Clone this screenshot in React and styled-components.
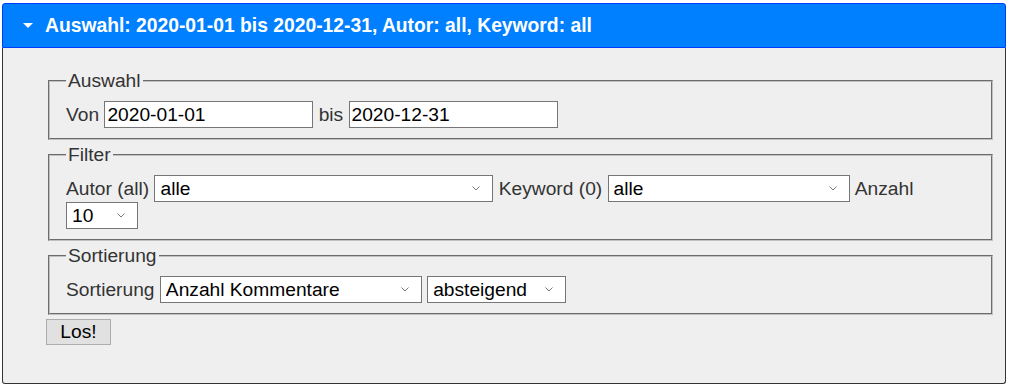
import React from "react";
import styled, { createGlobalStyle } from "styled-components";

const Global = createGlobalStyle`
  html, body { margin: 0; padding: 0; background: #ffffff; }
  body { font-family: "Liberation Sans", Arial, sans-serif; }
  * { box-sizing: border-box; }
`;

const Accordion = styled.div`
  margin: 3px 4px 0 2px;
  width: 1004px;
  font-family: "Liberation Sans", Arial, sans-serif;
  font-size: 19.2px;
`;

const Header = styled.div`
  display: flex;
  align-items: center;
  gap: 12px;
  height: 45px;
  padding-left: 20px;
  background: #007fff;
  border: 1px solid #003eff;
  border-radius: 3px 3px 0 0;
  color: #ffffff;
  font-weight: bold;
  font-size: 19.3px;
  line-height: 22px;
`;

const Caret = styled.svg`
  flex: none;
  display: block;
`;

const Content = styled.div`
  background: #efefef;
  border: 1px solid #333333;
  border-top: 0;
  border-radius: 0 0 3px 3px;
  padding: 22px 10px 38px 43px;
  color: #333333;
`;

const Form = styled.form`
  display: flex;
  flex-direction: column;
  gap: 4px;
  margin: 0;
`;

const Fieldset = styled.fieldset`
  margin: 0 2px;
  padding: 9px 16px 10px;
  border: 2px groove #c0c0c0;
  min-width: 0;
`;

const Legend = styled.legend`
  padding: 0 2px;
  font-size: 19.2px;
  line-height: 22px;
  color: #333333;
`;

const Row = styled.div`
  display: flex;
  flex-wrap: wrap;
  align-items: center;
  column-gap: 5.3px;
  row-gap: 0;
`;

const Label = styled.label`
  font-size: 19.2px;
  line-height: 22px;
  color: #333333;
  white-space: nowrap;
`;

const TextInput = styled.input`
  width: ${(p) => p.$w}px;
  height: 27px;
  padding: 1px 2px;
  border: 1px solid #767676;
  background: #ffffff;
  color: #000000;
  font-family: "Liberation Sans", Arial, sans-serif;
  font-size: 19.2px;
  outline: none;
`;

const SelectWrap = styled.span`
  position: relative;
  display: inline-block;
  width: ${(p) => p.$w}px;
  height: 27px;
`;

const Select = styled.select`
  appearance: none;
  -webkit-appearance: none;
  width: 100%;
  height: 27px;
  padding: 0 24px 0 5px;
  border: 1px solid #767676;
  border-radius: 0;
  background: #ffffff;
  color: #000000;
  font-family: "Liberation Sans", Arial, sans-serif;
  font-size: 19.2px;
  outline: none;
`;

const Chevron = styled.svg`
  position: absolute;
  right: 13px;
  top: 11px;
  pointer-events: none;
`;

const Button = styled.button`
  align-self: flex-start;
  width: 65px;
  height: 26px;
  padding: 0;
  background: #e1e1e1;
  border: 1px solid #adadad;
  border-radius: 0;
  color: #000000;
  font-family: "Liberation Sans", Arial, sans-serif;
  font-size: 19.2px;
  line-height: 22px;
`;

function Dropdown({ w, value, options }) {
  return (
    <SelectWrap $w={w}>
      <Select defaultValue={value}>
        {options.map((o) => (
          <option key={o} value={o}>
            {o}
          </option>
        ))}
      </Select>
      <Chevron width="8" height="5" viewBox="0 0 8 5">
        <path d="M0.5 0.5 L4 4 L7.5 0.5" fill="none" stroke="#7a7a7a" strokeWidth="1" />
      </Chevron>
    </SelectWrap>
  );
}

export default function App() {
  return (
    <>
      <Global />
      <Accordion>
        <Header>
          <Caret width="10" height="5" viewBox="0 0 10 5">
            <path d="M0 0 L10 0 L5 5 Z" fill="#ffffff" />
          </Caret>
          <span>Auswahl: 2020-01-01 bis 2020-12-31, Autor: all, Keyword: all</span>
        </Header>
        <Content>
          <Form onSubmit={(e) => e.preventDefault()}>
            <Fieldset>
              <Legend>Auswahl</Legend>
              <Row>
                <Label>Von</Label>
                <TextInput $w={209} defaultValue="2020-01-01" />
                <Label>bis</Label>
                <TextInput $w={209} defaultValue="2020-12-31" />
              </Row>
            </Fieldset>
            <Fieldset>
              <Legend>Filter</Legend>
              <Row>
                <Label>Autor (all)</Label>
                <Dropdown w={339} value="alle" options={["alle"]} />
                <Label>Keyword (0)</Label>
                <Dropdown w={242} value="alle" options={["alle"]} />
                <Label>Anzahl</Label>
                <Dropdown w={72} value="10" options={["10", "20", "50", "100"]} />
              </Row>
            </Fieldset>
            <Fieldset>
              <Legend>Sortierung</Legend>
              <Row>
                <Label>Sortierung</Label>
                <Dropdown
                  w={262}
                  value="Anzahl Kommentare"
                  options={["Anzahl Kommentare", "Datum", "Autor"]}
                />
                <Dropdown w={139} value="absteigend" options={["absteigend", "aufsteigend"]} />
              </Row>
            </Fieldset>
            <Button type="submit">Los!</Button>
          </Form>
        </Content>
      </Accordion>
    </>
  );
}
